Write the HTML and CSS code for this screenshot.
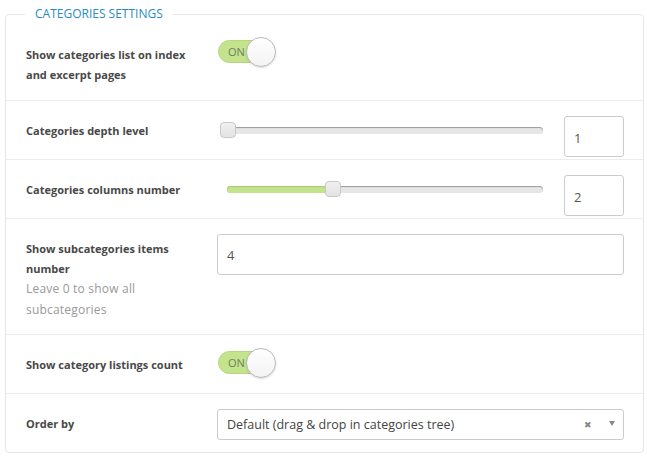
FILE: index.html
```html
<!DOCTYPE html>
<html>
<head>
<meta charset="utf-8">
<link rel="stylesheet" href="styles.css">
</head>
<body>
<fieldset class="panel">
  <legend class="panel-title">Categories settings</legend>

  <div class="row row-toggle-first">
    <div class="label lbl-toggle-first">Show categories list on index and excerpt pages</div>
    <div class="control">
      <div class="toggle"><span class="toggle-text">ON</span><span class="knob"></span></div>
    </div>
  </div>

  <div class="row row-slider">
    <div class="label lbl-slider">Categories depth level</div>
    <div class="control slider-control">
      <div class="slider">
        <div class="track"><div class="fill" style="width:0px"></div></div>
        <div class="handle" style="left:3px"></div>
      </div>
      <div class="input num">1</div>
    </div>
  </div>

  <div class="row row-slider">
    <div class="label lbl-slider">Categories columns number</div>
    <div class="control slider-control">
      <div class="slider">
        <div class="track"><div class="fill" style="width:106px"></div></div>
        <div class="handle" style="left:108px"></div>
      </div>
      <div class="input num">2</div>
    </div>
  </div>

  <div class="row row-text">
    <div class="label lbl-text">Show subcategories items number
      <div class="hint">Leave 0 to show all subcategories</div>
    </div>
    <div class="control">
      <div class="input wide">4</div>
    </div>
  </div>

  <div class="row row-toggle">
    <div class="label lbl-toggle">Show category listings count</div>
    <div class="control">
      <div class="toggle"><span class="toggle-text">ON</span><span class="knob"></span></div>
    </div>
  </div>

  <div class="row row-select">
    <div class="label lbl-select">Order by</div>
    <div class="control">
      <div class="select">
        <span class="select-value">Default (drag &amp; drop in categories tree)</span>
        <span class="select-clear">&#x2716;</span>
        <span class="select-arrow"></span>
      </div>
    </div>
  </div>
</fieldset>
</body>
</html>
```

FILE: styles.css
```css
html, body {
  margin: 0;
  padding: 0;
  background: #ffffff;
}

body {
  font-family: "Open Sans", "Noto Sans", sans-serif;
  color: #444;
}

.panel {
  margin: 6px 3px 0 5px;
  padding: 0;
  border: 1px solid #e6e6e6;
  border-radius: 4px;
  min-width: 0;
}

.panel-title {
  margin-left: 19px;
  padding: 0 10px;
  font-size: 12px;
  line-height: 16px;
  text-transform: uppercase;
  color: #2a8bc0;
  letter-spacing: 0;
}

.row {
  display: grid;
  grid-template-columns: 191px 1fr;
  align-items: start;
  padding: 15px 19px 15px 20px;
  border-bottom: 1px solid #ececec;
}

.row:last-child {
  border-bottom: none;
  padding-bottom: 12px;
}

.label {
  font-size: 11px;
  font-weight: 700;
  line-height: 20px;
  color: #484848;
  padding-right: 14px;
}

.hint {
  font-size: 12px;
  font-weight: 400;
  color: #999;
  line-height: 20.5px;
  padding-right: 20px;
  letter-spacing: 0.2px;
}

.lbl-toggle-first { margin-top: 8px; }
.lbl-slider { margin-top: 5px; }
.lbl-text { margin-top: 5px; }
.lbl-toggle { margin-top: 7px; }
.lbl-select { margin-top: 5px; }

.row-slider { padding-bottom: 2px; }
.row-text { padding-bottom: 14px; }
.row-toggle { padding-top: 13px; }

/* toggle */
.toggle {
  position: relative;
  width: 58px;
  height: 30px;
  margin-left: 1px;
}

.toggle::before {
  content: "";
  position: absolute;
  left: 0;
  top: 3px;
  width: 52px;
  height: 23px;
  border-radius: 12px;
  background: #c3e38c;
  border: 1px solid #b5d57e;
  box-sizing: border-box;
}

.toggle-text {
  position: absolute;
  left: 10px;
  top: 7px;
  font-size: 11px;
  line-height: 15px;
  color: #6f7f5c;
}

.knob {
  position: absolute;
  right: 0;
  top: 0;
  width: 30px;
  height: 30px;
  border-radius: 50%;
  background: linear-gradient(#ffffff, #f3f3f3);
  border: 1px solid #b9b9b9;
  box-sizing: border-box;
  box-shadow: 0 1px 2px rgba(0,0,0,0.15);
}

/* slider */
.slider-control {
  display: grid;
  grid-template-columns: 1fr 60px;
  column-gap: 21px;
  align-items: start;
}

.slider {
  position: relative;
  height: 16px;
  margin-top: 6px;
  padding-left: 10px;
}

.track {
  position: relative;
  top: 5px;
  height: 7px;
  border-radius: 4px;
  background: #e6e6e6;
  box-shadow: inset 0 1px 1px #9a9a9a;
}

.fill {
  height: 100%;
  border-radius: 4px 0 0 4px;
  background: #c3e38c;
  box-shadow: inset 0 1px 1px #a9c878;
}

.handle {
  position: absolute;
  top: 0;
  width: 16px;
  height: 16px;
  box-sizing: border-box;
  border: 1px solid #c8c8c8;
  border-radius: 4px;
  background: linear-gradient(#f0f0f0, #e3e3e3);
}

/* inputs */
.input {
  box-sizing: border-box;
  border: 1px solid #cccccc;
  border-radius: 3px;
  background: #fff;
  font-size: 13px;
  color: #555;
  padding: 0 9px;
}

.num {
  height: 41px;
  line-height: 43px;
}

.wide {
  height: 41px;
  line-height: 41px;
  padding-left: 9px;
}

/* select */
.select {
  position: relative;
  box-sizing: border-box;
  height: 31px;
  border: 1px solid #cccccc;
  border-radius: 3px;
  padding-left: 9px;
  display: flex;
  align-items: center;
  font-size: 12.5px;
  color: #444;
}

.select-value {
  flex: 1;
}

.select-clear {
  font-size: 9px;
  color: #888;
  margin-right: 17px;
}

.select-arrow {
  width: 0;
  height: 0;
  border-left: 3.5px solid transparent;
  border-right: 3.5px solid transparent;
  border-top: 5px solid #888;
  margin-right: 8px;
  margin-top: -2px;
}
```
